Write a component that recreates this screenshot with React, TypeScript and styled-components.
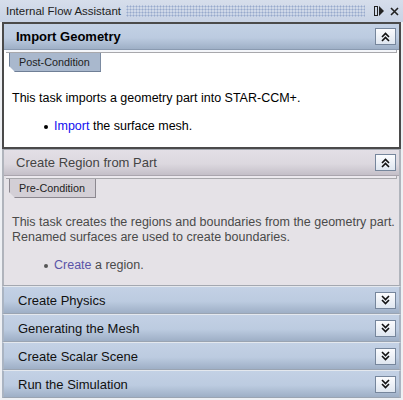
import styled, { createGlobalStyle } from "styled-components";

const GlobalStyle = createGlobalStyle`
  html, body {
    margin: 0;
    padding: 0;
    background: #eef0f4;
  }
  body {
    font-family: "Liberation Sans", Arial, sans-serif;
  }
`;

type Tone = "active" | "muted";

const Window = styled.div`
  width: 403px;
  height: 400px;
  background: #eef0f4;
  display: flex;
  flex-direction: column;
  overflow: hidden;
  & > * {
    flex-shrink: 0;
  }
`;

const TitleBar = styled.div`
  height: 22px;
  display: flex;
  align-items: center;
  gap: 5px;
  padding: 0 4px 0 6px;
  background: linear-gradient(#d6deeb, #c8d3e5);
  box-sizing: border-box;
`;

const TitleText = styled.span`
  font-size: 11.5px;
  color: #222;
  white-space: nowrap;
`;

const Dots = styled.div`
  flex: 1;
  height: 12px;
  background-image: radial-gradient(circle, #97a9cc 0.9px, transparent 1.1px);
  background-size: 3px 3px;
`;

const TitleIcons = styled.div`
  display: flex;
  align-items: center;
  gap: 6px;
  margin-left: 4px;
`;

const Stack = styled.div`
  display: flex;
  flex-direction: column;
  padding: 0 2px;
  & > * {
    flex-shrink: 0;
  }
`;

const Panel = styled.section<{ $tone: Tone }>`
  display: flex;
  flex-direction: column;
  border: ${(p) => (p.$tone === "active" ? "2px solid #4a4a4a" : "1px solid #a4a8b0")};
  ${(p) => (p.$tone === "muted" ? "border-left: 2px solid #b0b4bc; border-right: 2px solid #b0b4bc;" : "")}
  background: ${(p) => (p.$tone === "active" ? "#ffffff" : "#e5e2e7")};
`;

const Header = styled.div<{ $tone: Tone; $bold?: boolean }>`
  height: 25px;
  display: flex;
  align-items: center;
  justify-content: space-between;
  padding: 0 3px 0 12px;
  font-size: 13px;
  font-weight: ${(p) => (p.$bold ? "bold" : "normal")};
  color: ${(p) => (p.$tone === "active" ? "#000" : "#444")};
  background: ${(p) =>
    p.$tone === "active"
      ? "linear-gradient(#c3d1e5 0%, #bccbe0 55%, #9eafc6 100%)"
      : "linear-gradient(#e3dfe6 0%, #dcd8df 55%, #c4bfc8 100%)"};
  border-bottom: 1px solid ${(p) => (p.$tone === "active" ? "#8a9ab0" : "#aaa5ae")};
`;

const Strip = styled.div<{ $tone: Tone }>`
  height: 2px;
  margin: 0 2px;
  background: ${(p) => (p.$tone === "active" ? "#f4f6fa" : "#ece9ee")};
  border-bottom: 1px solid #a8a8ac;
  border-right: 1px solid #a8a8ac;
`;

const Tab = styled.div<{ $tone: Tone }>`
  align-self: flex-start;
  margin-left: 5px;
  height: 18px;
  padding: 0 10px 0 9px;
  display: flex;
  align-items: center;
  font-size: 10.8px;
  color: #222;
  background: ${(p) => (p.$tone === "active" ? "#a9b8cd" : "#d3cfd6")};
  border: 1px solid ${(p) => (p.$tone === "active" ? "#6f7f96" : "#8c8890")};
  border-top: none;
  clip-path: polygon(0 0, 100% 0, 100% 100%, 6px 100%, 0 calc(100% - 6px));
`;

const Body = styled.div<{ $tone: Tone }>`
  padding: 0 8px;
  font-size: 12.5px;
  line-height: 15px;
  color: ${(p) => (p.$tone === "active" ? "#000" : "#4a4a4a")};
`;

const Paragraph = styled.p<{ $top: number }>`
  margin: ${(p) => p.$top}px 0 0;
  white-space: nowrap;
`;

const BulletRow = styled.div<{ $top: number; $bottom: number }>`
  display: flex;
  align-items: center;
  margin: ${(p) => p.$top}px 0 ${(p) => p.$bottom}px 32px;
`;

const Bullet = styled.span<{ $tone: Tone }>`
  width: 4px;
  height: 4px;
  margin-right: 6px;
  border-radius: 50%;
  background: ${(p) => (p.$tone === "active" ? "#000" : "#555")};
`;

const Link = styled.span<{ $tone: Tone }>`
  color: ${(p) => (p.$tone === "active" ? "#1010f0" : "#5a55a8")};
`;

const Collapsed = styled.div`
  height: 26px;
  display: flex;
  align-items: center;
  justify-content: space-between;
  padding: 0 3px 0 14px;
  font-size: 13px;
  color: #111;
  background: linear-gradient(#c3d1e5 0%, #bccbe0 55%, #9eafc6 100%);
  border: 1px solid #9aa4b2;
  border-top-color: #e4e8ee;
  border-left: 2px solid #aab4c2;
  border-right: 2px solid #aab4c2;
`;

const Toggle = styled.button`
  width: 21px;
  height: 17px;
  padding: 0;
  display: flex;
  align-items: center;
  justify-content: center;
  background: linear-gradient(#fbfcfe, #dfe6f0);
  border: 1px solid #76869c;
  border-radius: 0;
`;

function Chevrons({ up }: { up: boolean }) {
  const d = up
    ? "M1 5 L4.5 1.5 L8 5 M1 9 L4.5 5.5 L8 9"
    : "M1 1 L4.5 4.5 L8 1 M1 5 L4.5 8.5 L8 5";
  return (
    <svg width="9" height="10" viewBox="0 0 9 10">
      <path d={d} fill="none" stroke="#111" strokeWidth="1.6" />
    </svg>
  );
}

const sections = [
  "Create Physics",
  "Generating the Mesh",
  "Create Scalar Scene",
  "Run the Simulation",
];

export default function App() {
  return (
    <Window>
      <GlobalStyle />
      <TitleBar>
        <TitleText>Internal Flow Assistant</TitleText>
        <Dots />
        <TitleIcons>
          <svg width="10" height="10" viewBox="0 0 10 10">
            <rect x="0.5" y="0.5" width="3" height="9" fill="none" stroke="#222" />
            <path d="M5 0 L10 5 L5 10 Z" fill="#222" />
          </svg>
          <svg width="9" height="9" viewBox="0 0 9 9">
            <path d="M1 1 L8 8 M8 1 L1 8" stroke="#222" strokeWidth="1.6" />
          </svg>
        </TitleIcons>
      </TitleBar>
      <Stack>
        <Panel $tone="active">
          <Header $tone="active" $bold>
            Import Geometry
            <Toggle>
              <Chevrons up />
            </Toggle>
          </Header>
          <Strip $tone="active" />
          <Tab $tone="active">Post-Condition</Tab>
          <Body $tone="active">
            <Paragraph $top={19}>This task imports a geometry part into STAR-CCM+.</Paragraph>
            <BulletRow $top={13} $bottom={13}>
              <Bullet $tone="active" />
              <span>
                <Link $tone="active">Import</Link> the surface mesh.
              </span>
            </BulletRow>
          </Body>
        </Panel>
        <Panel $tone="muted">
          <Header $tone="muted">
            Create Region from Part
            <Toggle>
              <Chevrons up />
            </Toggle>
          </Header>
          <Strip $tone="muted" />
          <Tab $tone="muted">Pre-Condition</Tab>
          <Body $tone="muted">
            <Paragraph $top={17}>
              This task creates the regions and boundaries from the geometry part.
              <br />
              Renamed surfaces are used to create boundaries.
            </Paragraph>
            <BulletRow $top={13} $bottom={12}>
              <Bullet $tone="muted" />
              <span>
                <Link $tone="muted">Create</Link> a region.
              </span>
            </BulletRow>
          </Body>
        </Panel>
        {sections.map((s) => (
          <Collapsed key={s}>
            {s}
            <Toggle>
              <Chevrons up={false} />
            </Toggle>
          </Collapsed>
        ))}
      </Stack>
    </Window>
  );
}
